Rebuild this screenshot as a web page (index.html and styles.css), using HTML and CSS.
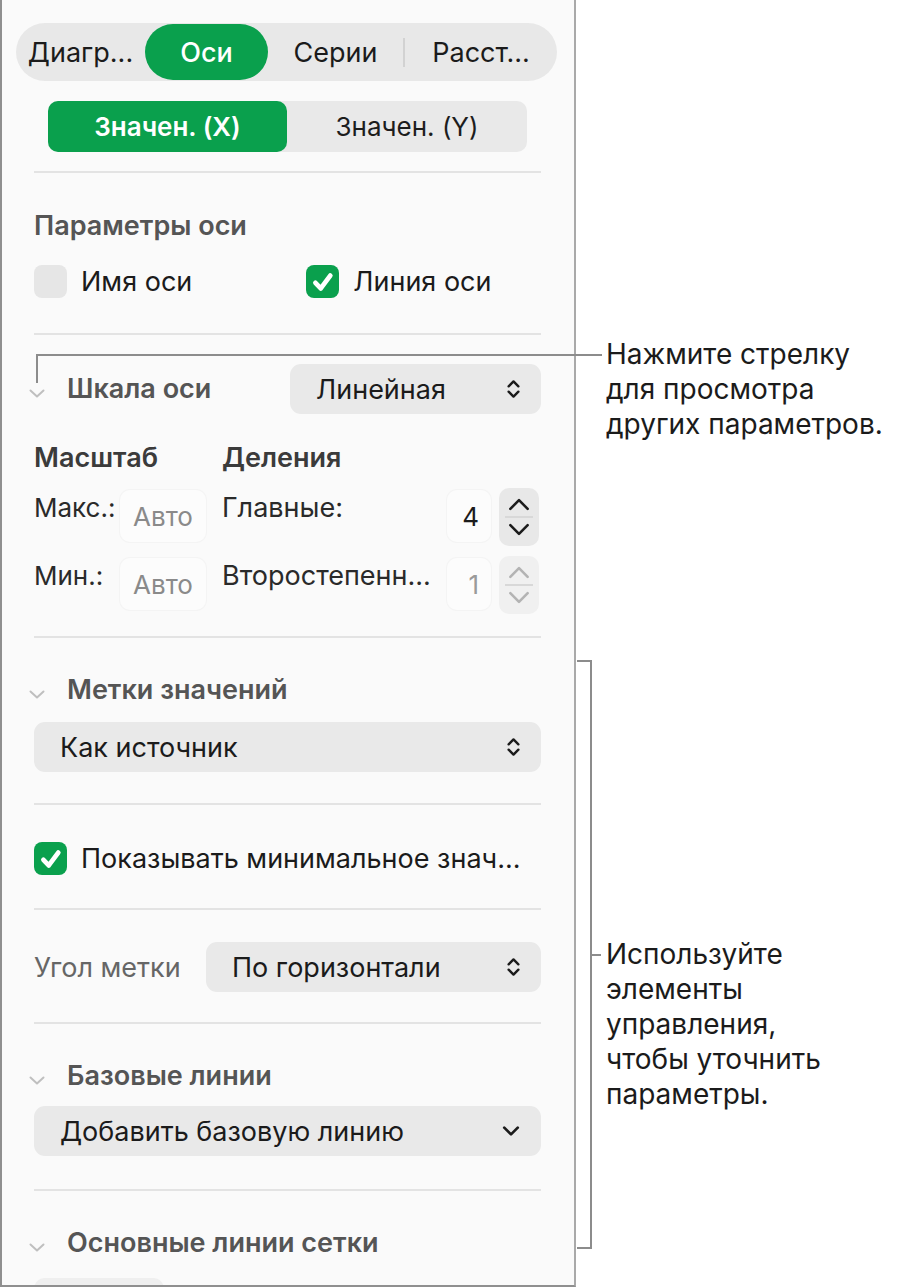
FILE: index.html
```html
<!DOCTYPE html>
<html lang="ru">
<head>
<meta charset="utf-8">
<title>Оси</title>
<link rel="stylesheet" href="styles.css">
</head>
<body>
<div class="page">
  <div class="panel">
    <div class="tabs">
      <div class="tab tab-1">Диагр...</div>
      <div class="tab tab-2 active">Оси</div>
      <div class="tab tab-3">Серии</div>
      <div class="tab-sep"></div>
      <div class="tab tab-4">Расст...</div>
    </div>
    <div class="seg">
      <div class="seg-item active">Значен. (X)</div>
      <div class="seg-item">Значен. (Y)</div>
    </div>

    <div class="sect">
      <hr class="sep">
      <div class="title title-params">Параметры оси</div>
      <div class="check-row">
        <label class="check"><span class="box"></span><span>Имя оси</span></label>
        <label class="check check-2"><span class="box on"><svg viewBox="0 0 20 20"><path d="M4.6 10.6 L8.4 14.6 L15.2 5.4"/></svg></span><span>Линия оси</span></label>
      </div>
      <hr class="sep sep-2">
    </div>

    <div class="sect">
      <div class="row-scale">
        <div class="disc-title"><svg class="disc" viewBox="0 0 16 9"><path d="M1.5 1.5 L8 7.5 L14.5 1.5"/></svg><span class="title">Шкала оси</span></div>
        <div class="popup popup-scale"><span>Линейная</span><svg class="updown" viewBox="0 0 12 20"><path d="M1.5 7.5 L6 3 L10.5 7.5 M1.5 12.5 L6 17 L10.5 12.5"/></svg></div>
      </div>
      <div class="grid-head">
        <div class="gh-1">Масштаб</div>
        <div class="gh-2">Деления</div>
      </div>
      <div class="grid-row">
        <div class="lbl">Макс.:</div>
        <div class="field">Авто</div>
        <div class="lbl lbl-2">Главные:</div>
        <div class="num">4</div>
        <div class="stepper"><svg viewBox="0 0 20 12"><path d="M2 10 L10 2 L18 10"/></svg><span class="st-line"></span><svg viewBox="0 0 20 12"><path d="M2 2 L10 10 L18 2"/></svg></div>
      </div>
      <div class="grid-row">
        <div class="lbl">Мин.:</div>
        <div class="field">Авто</div>
        <div class="lbl lbl-2">Второстепенн...</div>
        <div class="num dim">1</div>
        <div class="stepper dim"><svg viewBox="0 0 20 12"><path d="M2 10 L10 2 L18 10"/></svg><span class="st-line"></span><svg viewBox="0 0 20 12"><path d="M2 2 L10 10 L18 2"/></svg></div>
      </div>
      <hr class="sep sep-3">
    </div>

    <div class="sect">
      <div class="disc-title dt-labels"><svg class="disc" viewBox="0 0 16 9"><path d="M1.5 1.5 L8 7.5 L14.5 1.5"/></svg><span class="title">Метки значений</span></div>
      <div class="popup popup-wide popup-labels"><span>Как источник</span><svg class="updown" viewBox="0 0 12 20"><path d="M1.5 7.5 L6 3 L10.5 7.5 M1.5 12.5 L6 17 L10.5 12.5"/></svg></div>
      <hr class="sep sep-4">
      <label class="check check-min"><span class="box on"><svg viewBox="0 0 20 20"><path d="M4.6 10.6 L8.4 14.6 L15.2 5.4"/></svg></span><span>Показывать минимальное знач...</span></label>
      <hr class="sep sep-5">
      <div class="angle-row">
        <div class="angle-lbl">Угол метки</div>
        <div class="popup popup-angle"><span>По горизонтали</span><svg class="updown" viewBox="0 0 12 20"><path d="M1.5 7.5 L6 3 L10.5 7.5 M1.5 12.5 L6 17 L10.5 12.5"/></svg></div>
      </div>
      <hr class="sep sep-6">
    </div>

    <div class="sect">
      <div class="disc-title dt-base"><svg class="disc" viewBox="0 0 16 9"><path d="M1.5 1.5 L8 7.5 L14.5 1.5"/></svg><span class="title">Базовые линии</span></div>
      <div class="popup popup-wide popup-base"><span>Добавить базовую линию</span><svg class="down" viewBox="0 0 16 10"><path d="M2 2 L8 8 L14 2"/></svg></div>
      <hr class="sep sep-7">
      <div class="disc-title dt-grid"><svg class="disc" viewBox="0 0 16 9"><path d="M1.5 1.5 L8 7.5 L14.5 1.5"/></svg><span class="title">Основные линии сетки</span></div>
      <div class="popup popup-cut"></div>
    </div>
  </div>

  <div class="notes">
    <p class="note note-1">Нажмите стрелку<br>для просмотра<br>других параметров.</p>
    <p class="note note-2">Используйте<br>элементы<br>управления,<br>чтобы уточнить<br>параметры.</p>
  </div>

  <div class="callout-h"></div>
  <div class="callout-v"></div>
  <div class="bracket"></div>
  <div class="bracket-tick"></div>
</div>
</body>
</html>
```

FILE: styles.css
```css
* { box-sizing: border-box; }
html, body { margin: 0; padding: 0; background: #ffffff; }
body {
  font-family: Inter, "Noto Sans", "DejaVu Sans", sans-serif;
  color: #1d1d1d;
  width: 902px;
  height: 1287px;
  overflow: hidden;
}
.page {
  position: relative;
  display: flex;
  width: 902px;
  height: 1287px;
}

/* ---------- panel ---------- */
.panel {
  width: 576px;
  height: 1287px;
  flex: none;
  background: #fafafa;
  border-left: 2px solid #8f8f8f;
  border-right: 2px solid #a9a9a9;
  border-bottom: 2px solid #8f8f8f;
  padding: 23px 33px 0 32px;
  overflow: hidden;
  display: flex;
  flex-direction: column;
}
.panel > *, .sect > * { flex-shrink: 0; }

/* tabs */
.tabs {
  margin-left: -18px;
  width: 541px;
  height: 58px;
  background: #e8e8e8;
  border-radius: 29px;
  display: flex;
  align-items: center;
  font-size: 27px;
}
.tab {
  height: 56px;
  display: flex;
  align-items: center;
  justify-content: center;
  color: #1b1b1b;
  flex-shrink: 0;
}
.tab-1 { width: 129px; }
.tab-2 { width: 123px; }
.tab-3 { width: 135px; }
.tab-4 { flex: 1; }
.tab.active {
  background: #0aa04d;
  color: #ffffff;
  border-radius: 28px;
  font-weight: 500;
}
.tab-sep {
  width: 2px;
  height: 29px;
  background: #d2d2d2;
  flex-shrink: 0;
}

/* segmented */
.seg {
  margin-top: 20px;
  margin-left: 14px;
  width: 479px;
  height: 51px;
  background: #e9e9e9;
  border-radius: 10px;
  display: flex;
  font-size: 26px;
}
.seg-item {
  flex: 1;
  display: flex;
  align-items: center;
  justify-content: center;
  color: #1d1d1d;
}
.seg-item.active {
  flex: none;
  width: 239px;
  background: #0aa04d;
  color: #ffffff;
  border-radius: 10px;
  font-weight: 600;
}

/* separators */
.sep {
  border: 0;
  height: 2px;
  background: #e3e3e3;
  margin: 19px 0 0 0;
  width: 507px;
}

.sect { display: flex; flex-direction: column; }

.title {
  font-size: 27px;
  font-weight: 600;
  color: #555555;
  line-height: 30px;
  white-space: nowrap;
}
.title-params { margin-top: 38px; }

/* checkboxes */
.check-row {
  display: flex;
  margin-top: 24px;
}
.check {
  display: flex;
  align-items: center;
  font-size: 27px;
  color: #1b1b1b;
  height: 33px;
  white-space: nowrap;
}
.check .box {
  width: 33px;
  height: 33px;
  border-radius: 8px;
  background: #e6e6e6;
  margin-right: 14px;
  flex: none;
  display: flex;
  align-items: center;
  justify-content: center;
}
.check .box.on { background: #0aa04d; }
.check .box svg {
  width: 28px;
  height: 28px;
  fill: none;
  stroke: #ffffff;
  stroke-width: 3.4;
  stroke-linecap: round;
  stroke-linejoin: round;
}
.check-2 { margin-left: 114px; }
.sep-2 { margin-top: 35px; }

/* scale row */
.row-scale {
  margin-top: 29px;
  height: 50px;
  display: flex;
  align-items: center;
  justify-content: space-between;
}
.disc-title {
  display: flex;
  align-items: center;
  margin-left: -5px;
}
.disc {
  width: 16px;
  height: 9px;
  fill: none;
  stroke: #bfbfbf;
  stroke-width: 2;
  stroke-linecap: round;
  stroke-linejoin: round;
  margin-right: 22px;
  margin-top: 9px;
  flex: none;
}

.popup {
  height: 50px;
  background: #e9e9e9;
  border-radius: 11px;
  display: flex;
  align-items: center;
  justify-content: space-between;
  padding: 0 21px 0 26px;
  font-size: 27px;
  color: #1b1b1b;
  white-space: nowrap;
}
.popup .updown {
  width: 13px;
  height: 22px;
  fill: none;
  stroke: #1b1b1b;
  stroke-width: 2.2;
  stroke-linecap: round;
  stroke-linejoin: round;
  flex: none;
}
.popup .down {
  width: 18px;
  height: 12px;
  fill: none;
  stroke: #1b1b1b;
  stroke-width: 2.4;
  stroke-linecap: round;
  stroke-linejoin: round;
  flex: none;
}
.popup-scale { width: 251px; }

/* scale / divisions grid */
.grid-head {
  margin-top: 29px;
  display: flex;
  font-size: 27px;
  font-weight: 600;
  color: #3b3b3b;
  line-height: 30px;
}
.gh-1 { width: 188px; }
.grid-row {
  margin-top: 15px;
  height: 58px;
  display: flex;
  align-items: flex-start;
}
.grid-row + .grid-row { margin-top: 10px; }
.lbl {
  font-size: 26px;
  line-height: 30px;
  color: #2a2a2a;
  width: 86px;
  margin-top: 5px;
  white-space: nowrap;
}
.field {
  width: 86px;
  height: 52px;
  border-radius: 10px;
  background: #fcfcfc;
  box-shadow: 0 0 0 1px #f4f4f4;
  color: #8a8a8a;
  font-size: 26px;
  display: flex;
  align-items: center;
  justify-content: center;
  margin-right: 16px;
  margin-top: 2px;
}
.lbl-2 { width: 225px; font-size: 27px; }
.num {
  width: 44px;
  height: 52px;
  border-radius: 10px;
  background: #fcfcfc;
  box-shadow: 0 0 0 1px #f4f4f4;
  font-size: 26px;
  color: #1b1b1b;
  display: flex;
  align-items: center;
  justify-content: flex-end;
  padding-right: 12px;
  margin-top: 2px;
}
.num.dim { color: #9a9a9a; }
.stepper {
  margin-left: 8px;
  width: 40px;
  height: 58px;
  border-radius: 10px;
  background: #e8e8e8;
  display: flex;
  flex-direction: column;
  align-items: center;
  justify-content: center;
}
.stepper svg {
  width: 22px;
  height: 13px;
  fill: none;
  stroke: #1b1b1b;
  stroke-width: 2.4;
  stroke-linecap: round;
  stroke-linejoin: round;
}
.stepper.dim { background: #f0f0f0; }
.stepper.dim svg { stroke: #b3b3b3; }
.st-line {
  width: 28px;
  height: 2px;
  background: #d8d8d8;
  margin: 5px 0;
}
.sep-3 { margin-top: 22px; }

/* labels */
.dt-labels { margin-top: 37px; }
.popup-wide { width: 507px; }
.popup-labels { margin-top: 17px; }
.sep-4 { margin-top: 31px; }
.check-min { margin-top: 37px; }
.sep-5 { margin-top: 33px; }

.angle-row {
  margin-top: 32px;
  display: flex;
  align-items: center;
  justify-content: space-between;
}
.angle-lbl {
  font-size: 27px;
  color: #666666;
  white-space: nowrap;
}
.popup-angle { width: 335px; }
.sep-6 { margin-top: 30px; }

.dt-base { margin-top: 37px; }
.popup-base { margin-top: 15px; }
.sep-7 { margin-top: 33px; }
.dt-grid { margin-top: 37px; }
.popup-cut {
  margin-top: 20px;
  width: 130px;
  background: #efefef;
}

/* ---------- notes ---------- */
.notes {
  flex: 1;
  padding-left: 30px;
  display: flex;
  flex-direction: column;
}
.note {
  margin: 0;
  font-size: 28px;
  line-height: 35px;
  color: #1b1b1b;
  white-space: nowrap;
}
.note-1 { margin-top: 337px; }
.note-2 { margin-top: 495px; }

/* ---------- callout lines (overlays) ---------- */
.callout-h {
  position: absolute;
  left: 36px;
  top: 354px;
  width: 566px;
  height: 2px;
  background: #8c8c8c;
}
.callout-v {
  position: absolute;
  left: 36px;
  top: 354px;
  width: 2px;
  height: 29px;
  background: #8c8c8c;
}
.bracket {
  position: absolute;
  left: 577px;
  top: 660px;
  width: 15px;
  height: 589px;
  border-top: 2px solid #8c8c8c;
  border-right: 2px solid #8c8c8c;
  border-bottom: 2px solid #8c8c8c;
}
.bracket-tick {
  position: absolute;
  left: 592px;
  top: 954px;
  width: 9px;
  height: 2px;
  background: #8c8c8c;
}
```
